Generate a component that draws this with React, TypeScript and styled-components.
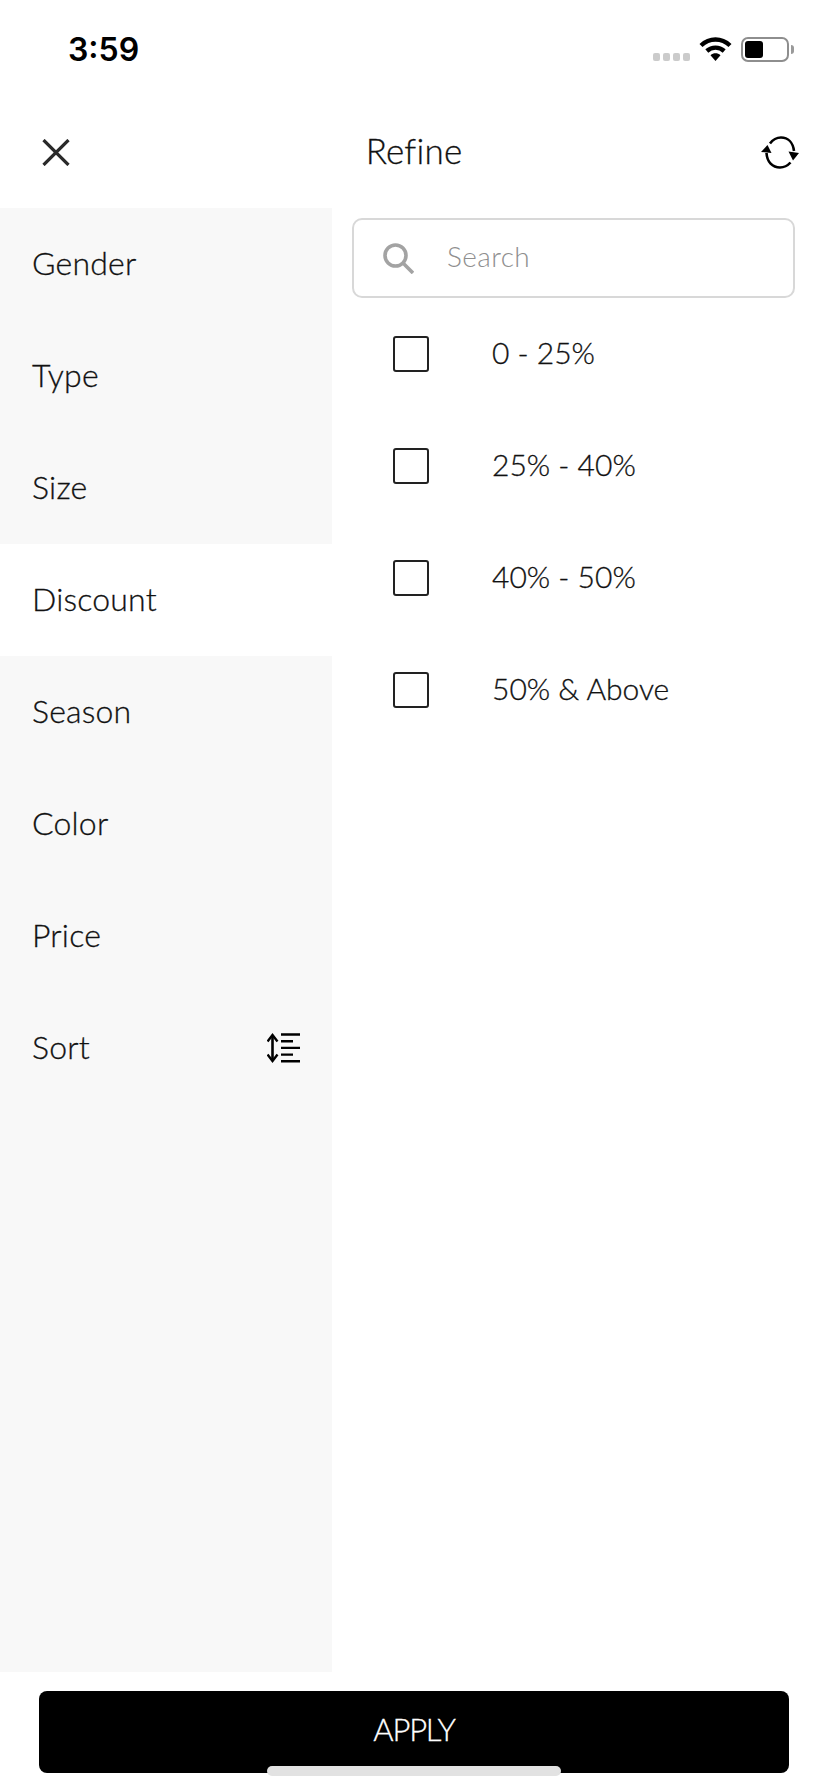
import React from "react";
import styled, { createGlobalStyle } from "styled-components";

const GlobalStyle = createGlobalStyle`
  html, body {
    margin: 0;
    padding: 0;
    background: #fff;
  }
  * {
    box-sizing: border-box;
  }
`;

const Screen = styled.div`
  position: relative;
  display: flex;
  flex-direction: column;
  width: 828px;
  height: 1792px;
  background: #fff;
  font-family: "Lato", "Open Sans", sans-serif;
  color: #222;
  overflow: hidden;
`;

// Status bar
const StatusBar = styled.div`
  display: flex;
  align-items: center;
  justify-content: space-between;
  height: 98px;
  padding: 0 39px 0 68px;
`;

const Clock = styled.span`
  font-family: "Inter", "Liberation Sans", sans-serif;
  font-weight: 600;
  font-size: 32px;
  line-height: 36px;
  margin-top: 1px;
  color: #000;
`;

const StatusIcons = styled.div`
  display: flex;
  align-items: center;
  gap: 9px;
`;

const SignalDots = styled.div`
  display: flex;
  gap: 3px;
  margin-top: 16px;
`;

const SignalDot = styled.span`
  width: 7px;
  height: 8px;
  border-radius: 2px;
  background: #cbcbcb;
`;

const Battery = styled.div`
  position: relative;
  width: 48px;
  height: 25px;
  padding: 2px;
  border: 2px solid #8e8e8e;
  border-radius: 7px;

  &::after {
    content: "";
    position: absolute;
    right: -7px;
    top: 6px;
    width: 3px;
    height: 9px;
    border-radius: 0 3px 3px 0;
    background: #9a9a9a;
  }
`;

const BatteryFill = styled.div`
  width: 18px;
  height: 100%;
  border-radius: 3px;
  background: #000;
`;

// Header
const Header = styled.header`
  display: grid;
  grid-template-columns: 1fr auto 1fr;
  align-items: center;
  height: 110px;
  padding: 0 29px 2px;
`;

const CloseButton = styled.button`
  display: flex;
  justify-self: start;
  margin-left: 13px;
  padding: 0;
  border: none;
  background: none;
`;

const Title = styled.h1`
  margin: 0 0 4px;
  font-weight: 300;
  font-size: 35px;
  letter-spacing: 0.2px;
  color: #111;
  -webkit-text-stroke: 0.3px #111;
`;

const ResetButton = styled.button`
  display: flex;
  justify-self: end;
  padding: 0;
  border: none;
  background: none;
`;

// Body
const Body = styled.div`
  display: flex;
  height: 1464px;
`;

const Sidebar = styled.nav`
  flex: 0 0 332px;
  background: #f8f8f8;
`;

const SidebarRow = styled.div<{ $active?: boolean }>`
  display: flex;
  align-items: center;
  justify-content: space-between;
  height: 112px;
  padding: 0 32px;
  font-weight: 300;
  font-size: 32px;
  letter-spacing: 0.2px;
  color: #111;
  -webkit-text-stroke: 0.3px #111;
  background: ${(p) => (p.$active ? "#fff" : "transparent")};

  & > span {
    margin-bottom: 4px;
  }
`;

const Content = styled.section`
  flex: 1;
  padding: 10px 33px 0 20px;
`;

const SearchBox = styled.div`
  display: flex;
  align-items: center;
  gap: 33px;
  height: 80px;
  padding: 0 29px;
  border: 2px solid #d8d8d8;
  border-radius: 10px;
`;

const SearchPlaceholder = styled.span`
  margin-bottom: 5px;
  font-weight: 300;
  font-size: 28px;
  letter-spacing: 0.4px;
  color: #8f8f8f;
`;

const OptionRow = styled.label`
  display: flex;
  align-items: center;
  gap: 63px;
  height: 112px;
  padding-left: 41px;
  font-weight: 300;
  font-size: 30px;
  color: #111;
  -webkit-text-stroke: 0.3px #111;

  & > span:last-child {
    margin-bottom: 4px;
  }
`;

const CheckBox = styled.span`
  flex: none;
  width: 36px;
  height: 36px;
  border: 2px solid #222;
  border-radius: 3px;
`;

// Footer
const Footer = styled.footer`
  flex: 1;
  padding: 19px 39px 0;
`;

const ApplyButton = styled.button`
  display: block;
  width: 100%;
  height: 82px;
  padding: 0 0 6px;
  border: none;
  border-radius: 8px;
  background: #000;
  color: #fff;
  font-family: inherit;
  font-weight: 300;
  font-size: 31px;
  letter-spacing: -1.2px;
  -webkit-text-stroke: 0.3px #fff;
`;

const HomeIndicator = styled.div`
  position: absolute;
  left: 267px;
  top: 1766px;
  width: 294px;
  height: 10px;
  border-radius: 6px;
  background: #e2e2e2;
`;

const WifiIcon = () => (
  <svg width="33" height="24" viewBox="0 0 33 24">
    <path d="M2 8.5C10.5 0.5 22.5 0.5 31 8.5" fill="none" stroke="#000" strokeWidth="4.4" />
    <path d="M7.8 14C12.8 9.5 20.2 9.5 25.2 14" fill="none" stroke="#000" strokeWidth="4.4" />
    <path d="M11.5 18.2C14.5 15.6 18.5 15.6 21.5 18.2L16.5 24Z" fill="#000" />
  </svg>
);

const CloseIcon = () => (
  <svg width="28" height="27" viewBox="0 0 28 27">
    <path d="M1.5 1L26.5 26M26.5 1L1.5 26" fill="none" stroke="#2a2a2a" strokeWidth="3.2" />
  </svg>
);

// Two open arcs, the left one ends in an arrow up, the right one in an arrow down
const ResetIcon = () => (
  <svg width="38" height="33" viewBox="0 0 38 33">
    <path d="M9 7.5C12 3.5 15.5 1.5 20 1.5C27 1.5 32 6.5 33 15" fill="none" stroke="#000" strokeWidth="2.6" />
    <path d="M29.5 26.5C26.5 29.8 23.5 31.5 19 31.5C11.5 31.5 6 26 5.5 17" fill="none" stroke="#000" strokeWidth="2.6" />
    <path d="M0 16L6.5 9L10.5 17Z" fill="#000" />
    <path d="M27.5 15.5L38 17L32 24.5Z" fill="#000" />
  </svg>
);

const SearchIcon = () => (
  <svg width="31" height="31" viewBox="0 0 31 31">
    <circle cx="12.5" cy="12.5" r="10.5" fill="none" stroke="#a3a3a3" strokeWidth="3.6" />
    <path d="M20 20L30 30" fill="none" stroke="#a3a3a3" strokeWidth="3.6" />
  </svg>
);

const SortIcon = () => (
  <svg width="33" height="30" viewBox="0 0 33 30">
    <path d="M5.5 2V28" fill="none" stroke="#000" strokeWidth="2.6" />
    <path d="M0.5 8.5L5.5 2L10.5 8.5M0.5 21.5L5.5 28L10.5 21.5" fill="none" stroke="#000" strokeWidth="2.4" />
    <path d="M14 1.5H33M14 8.2H26M14 14.9H33M14 21.6H26M14 28.3H33" fill="none" stroke="#000" strokeWidth="2.4" />
  </svg>
);

const filters = ["Gender", "Type", "Size", "Discount", "Season", "Color", "Price", "Sort"];
const discounts = ["0 - 25%", "25% - 40%", "40% - 50%", "50% & Above"];

export default function App() {
  return (
    <Screen>
      <GlobalStyle />
      <StatusBar>
        <Clock>3:59</Clock>
        <StatusIcons>
          <SignalDots>
            {[0, 1, 2, 3].map((i) => (
              <SignalDot key={i} />
            ))}
          </SignalDots>
          <WifiIcon />
          <Battery>
            <BatteryFill />
          </Battery>
        </StatusIcons>
      </StatusBar>

      <Header>
        <CloseButton>
          <CloseIcon />
        </CloseButton>
        <Title>Refine</Title>
        <ResetButton>
          <ResetIcon />
        </ResetButton>
      </Header>

      <Body>
        <Sidebar>
          {filters.map((name) => (
            <SidebarRow key={name} $active={name === "Discount"}>
              <span>{name}</span>
              {name === "Sort" && <SortIcon />}
            </SidebarRow>
          ))}
        </Sidebar>
        <Content>
          <SearchBox>
            <SearchIcon />
            <SearchPlaceholder>Search</SearchPlaceholder>
          </SearchBox>
          {discounts.map((label) => (
            <OptionRow key={label}>
              <CheckBox />
              <span>{label}</span>
            </OptionRow>
          ))}
        </Content>
      </Body>

      <Footer>
        <ApplyButton>APPLY</ApplyButton>
      </Footer>
      <HomeIndicator />
    </Screen>
  );
}
